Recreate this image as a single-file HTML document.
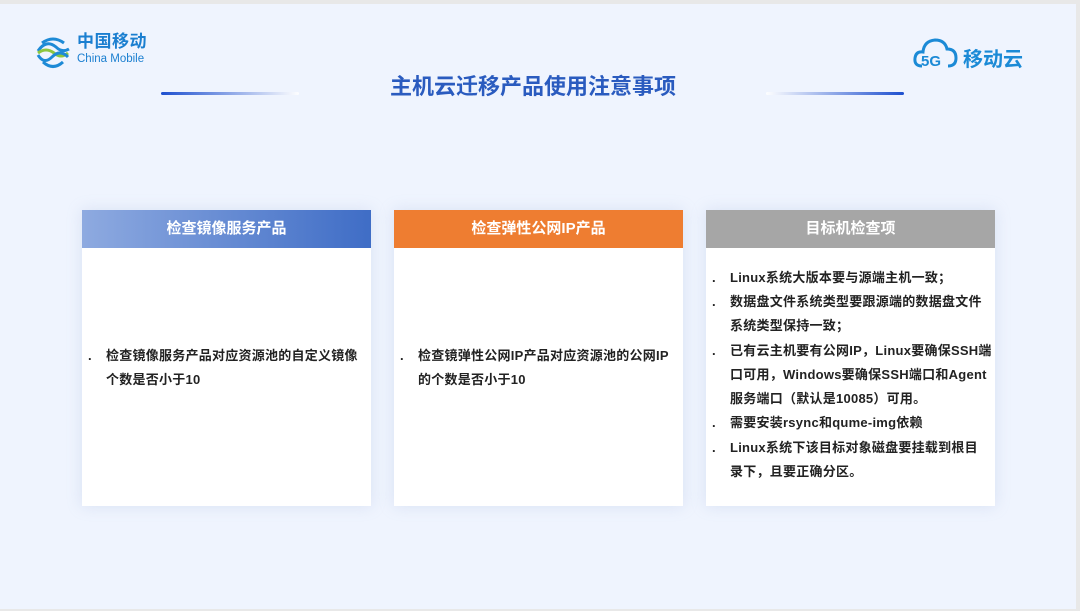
<!DOCTYPE html>
<html><head><meta charset="utf-8"><style>
*{margin:0;padding:0;box-sizing:border-box}
body{width:1080px;height:611px;overflow:hidden;background:#e8e8e8;font-family:"Liberation Sans","Noto Sans CJK SC",sans-serif;position:relative}
.page{position:absolute;left:0;top:4px;width:1076px;height:605px;background:#eff4fe}
.title{position:absolute;top:71px;left:0;width:1066px;text-align:center;font-size:22px;line-height:24px;font-weight:bold;color:#2a5bbf}
.line{position:absolute;top:88px;height:3px;width:138px;border-radius:2px}
.card{position:absolute;top:206px;width:289px;height:296px;background:#fff;box-shadow:0 0 14px rgba(150,170,210,0.25)}
.hd{height:38px;line-height:38px;text-align:center;color:#fff;font-size:15px;font-weight:bold}
.bd{position:absolute;left:0;right:0;top:38px;bottom:0;display:flex;flex-direction:column;justify-content:center;padding:0 2px 0 24px;font-size:13px;letter-spacing:0.25px;font-weight:bold;color:#222;line-height:24.3px}
.bd p{position:relative}
.bd p:before{content:".";position:absolute;left:-18px;font-weight:bold}
.nw p{white-space:nowrap}
</style></head><body>
<div class="page">
<svg style="position:absolute;left:34px;top:29px" width="38" height="38" viewBox="0 0 38 38">
<path d="M8 10 Q19 2 30 10" stroke="#1d8ad6" stroke-width="3" fill="none"/>
<path d="M4 18 Q12 6 22 14 Q28 20 35 16" stroke="#1d8ad6" stroke-width="3" fill="none"/>
<path d="M4 20 Q12 14 20 20 Q27 26 34 20" stroke="#8cc63f" stroke-width="3" fill="none"/>
<path d="M4 22 Q10 32 18 24 Q26 16 34 24" stroke="#1d8ad6" stroke-width="3" fill="none"/>
<path d="M9 29 Q19 38 29 29" stroke="#1d8ad6" stroke-width="3" fill="none"/>
</svg>
<div style="position:absolute;left:77px;top:29px;line-height:18px;color:#1b7fd0;font-size:17px;font-weight:bold;letter-spacing:0.5px">中国移动</div>
<div style="position:absolute;left:77px;top:49px;line-height:12px;color:#1b7fd0;font-size:11.5px">China Mobile</div>
<svg style="position:absolute;left:912px;top:30px" width="48" height="36" viewBox="0 0 48 36">
<path d="M10 32 Q2 32 3 24 Q4 17 11 18 Q12 7 23 6 Q33 6 35 15 Q44 15 44 24 Q44 32 36 32" fill="none" stroke="#1b8ad6" stroke-width="3"/>
<text x="9" y="32" font-size="15" font-weight="bold" fill="#1b8ad6" font-family="Liberation Sans">5G</text>
</svg>
<div style="position:absolute;left:963px;top:39px;color:#1b8ad6;font-size:20px;font-weight:bold">移动云</div>
<div class="line" style="left:161px;background:linear-gradient(90deg,#1d4fcf,rgba(255,255,255,0.9))"></div>
<div class="line" style="left:766px;background:linear-gradient(90deg,rgba(255,255,255,0.9),#1d4fcf)"></div>
<div class="title">主机云迁移产品使用注意事项</div>

<div class="card" style="left:82px"><div class="hd" style="background:linear-gradient(90deg,#8eaae0,#3f6dc6)">检查镜像服务产品</div>
<div class="bd" style="padding-bottom:18px;padding-right:6px"><p>检查镜像服务产品对应资源池的自定义镜像个数是否小于10</p></div></div>
<div class="card" style="left:394px"><div class="hd" style="background:#ee7d31">检查弹性公网IP产品</div>
<div class="bd" style="padding-bottom:18px;padding-right:6px"><p>检查镜弹性公网IP产品对应资源池的公网IP的个数是否小于10</p></div></div>
<div class="card" style="left:706px"><div class="hd" style="background:#a6a6a6">目标机检查项</div>
<div class="bd nw" style="padding-bottom:4px"><p>Linux系统大版本要与源端主机一致；</p><p>数据盘文件系统类型要跟源端的数据盘文件<br>系统类型保持一致；</p><p>已有云主机要有公网IP，Linux要确保SSH端<br>口可用，Windows要确保SSH端口和Agent<br>服务端口（默认是10085）可用。</p><p>需要安装rsync和qume-img依赖</p><p>Linux系统下该目标对象磁盘要挂载到根目<br>录下，且要正确分区。</p></div></div>
</div>
</body></html>
